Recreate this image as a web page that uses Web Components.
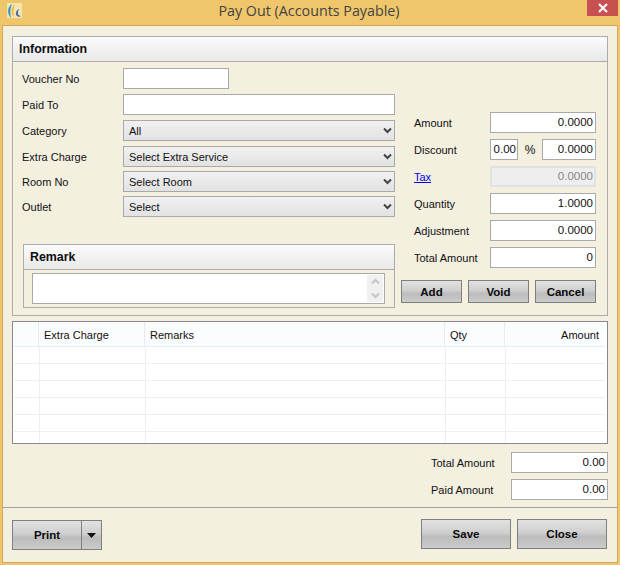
<!DOCTYPE html>
<html>
<head>
<meta charset="utf-8">
<title>Pay Out (Accounts Payable)</title>
<style>
  html, body { margin: 0; padding: 0; background: #f4f0e0; }
  body { font: 11px "Liberation Sans", sans-serif; color: #111; }
</style>
</head>
<body>
<pay-window heading="Pay Out (Accounts Payable)">
  <ui-panel heading="Information" style="height:280px">
    <div style="display:flex;gap:6px;padding:6px 12px 0 10px">
      <div style="width:372px;flex:none;--label-shift:-1px">
        <form-row label="Voucher No" width="100"><ui-box style="flex:none;width:106px"></ui-box></form-row>
        <form-row label="Paid To" width="100" style="margin-top:5px"><ui-box></ui-box></form-row>
        <form-row label="Category" width="100" style="margin-top:5px"><ui-select>All</ui-select></form-row>
        <form-row label="Extra Charge" width="100" style="margin-top:5px"><ui-select>Select Extra Service</ui-select></form-row>
        <form-row label="Room No" width="100" style="margin-top:4px"><ui-select>Select Room</ui-select></form-row>
        <form-row label="Outlet" width="100" style="margin-top:4px"><ui-select>Select</ui-select></form-row>
        <ui-panel heading="Remark" compact style="margin-top:27px;height:64px">
          <remark-box></remark-box>
        </ui-panel>
      </div>
      <div style="width:195px;flex:none;padding-top:44px">
        <div style="padding-left:13px">
          <form-row label="Amount" width="76"><ui-box align="right">0.0000</ui-box></form-row>
          <form-row label="Discount" width="76" style="margin-top:6px">
            <ui-box align="right" tight style="width:28px;flex:none">0.00</ui-box>
            <span style="width:24px;text-align:center;flex:none;font-size:12px">%</span>
            <ui-box align="right">0.0000</ui-box>
          </form-row>
          <form-row label="Tax" link width="76" style="margin-top:6px"><ui-box align="right" disabled>0.0000</ui-box></form-row>
          <form-row label="Quantity" width="76" style="margin-top:6px"><ui-box align="right">1.0000</ui-box></form-row>
          <form-row label="Adjustment" width="76" style="margin-top:6px"><ui-box align="right">0.0000</ui-box></form-row>
          <form-row label="Total Amount" width="76" style="margin-top:6px"><ui-box align="right">0</ui-box></form-row>
        </div>
        <div style="display:flex;gap:6px;margin-top:12px">
          <ui-button style="width:61px;height:23px">Add</ui-button>
          <ui-button style="width:61px;height:23px">Void</ui-button>
          <ui-button style="width:61px;height:23px">Cancel</ui-button>
        </div>
      </div>
    </div>
  </ui-panel>

  <charge-grid style="margin-top:5px"></charge-grid>

  <div style="width:177px;margin:8px 0 0 auto">
    <form-row label="Total Amount" width="80"><ui-box align="right">0.00</ui-box></form-row>
    <form-row label="Paid Amount" width="80" style="margin-top:6px"><ui-box align="right">0.00</ui-box></form-row>
  </div>

  <ui-button slot="footer-left" split style="width:90px;height:30px;margin-top:1px">Print</ui-button>
  <ui-button slot="footer-right" style="width:90px;height:30px">Save</ui-button>
  <ui-button slot="footer-right" style="width:90px;height:30px">Close</ui-button>
</pay-window>

<script>
class PayWindow extends HTMLElement {
  constructor() {
    super();
    const shadowRoot = this.attachShadow({ mode: 'open' });
    shadowRoot.innerHTML = `<style>
        :host { display: flex; flex-direction: column; width: 620px; height: 565px; background: #efc66b; box-sizing: border-box; padding: 0 2px 2px 2px; overflow: hidden; }
        .title { height: 25px; flex: none; display: flex; align-items: center; justify-content: center; position: relative; font: 14.3px "Open Sans", sans-serif; color: #444; padding: 0 2px 4px 0; box-sizing: border-box; }
        .logo { position: absolute; left: 3px; top: 2px; }
        .close { position: absolute; right: 0; top: 0; width: 31px; height: 16px; background: #c75050; display: flex; align-items: center; justify-content: center; }
        .body { flex: 1; display: flex; flex-direction: column; background: #f4f0e0; border: 1px solid #d3a85a; min-height: 0; }
        .main { flex: 1; padding: 10px 9px 0 9px; }
        .footer { height: 55px; flex: none; box-sizing: border-box; border-top: 1px solid #a0a0a0; padding: 11px 10px 0 9px; display: flex; justify-content: space-between; align-items: flex-start; }
        .right { display: flex; gap: 6px; }
        </style>
        <div class="title">
          <svg class="logo" width="18" height="18" viewBox="0 0 18 18">
            <rect x="2" y="1" width="15" height="15" fill="#f4e4ad"/>
            <path d="M7 2C2 5 2 12 6 16C5 11 5 7 7 2Z" fill="#3a93c6"/>
            <path d="M10 2C6 5 6 12 9 15C8 11 8 7 10 2Z" fill="#e6b42e"/>
            <path d="M14 7C11 8 10 12 12 14C13 15 15 15 16 14C13 14 12 11 14 7Z" fill="#4468b0"/>
          </svg>
          <span id="heading"></span>
          <div class="close"><svg width="10" height="10" viewBox="0 0 10 10"><path d="M1 1L9 9M9 1L1 9" stroke="#fff" stroke-width="2"/></svg></div>
        </div>
        <div class="body">
          <div class="main"><slot></slot></div>
          <div class="footer">
            <slot name="footer-left"></slot>
            <div class="right"><slot name="footer-right"></slot></div>
          </div>
        </div>`;
    shadowRoot.querySelector('#heading').textContent = this.getAttribute('heading');
  }
}
customElements.define('pay-window', PayWindow);

class UiPanel extends HTMLElement {
  constructor() {
    super();
    const shadowRoot = this.attachShadow({ mode: 'open' });
    shadowRoot.innerHTML = `<style>
        :host { display: block; box-sizing: border-box; border: 1px solid #ababab; }
        .head { height: 25px; box-sizing: border-box; border-bottom: 1px solid #ababab; background: linear-gradient(#fbfbfb, #e8e8e8); padding-left: 6px; display: flex; align-items: center; font-weight: 700; font-size: 12.4px; color: #0d0d0d; }
        </style>
        <div class="head"></div>
        <slot></slot>`;
    shadowRoot.querySelector('.head').textContent = this.getAttribute('heading');
  }
}
customElements.define('ui-panel', UiPanel);

class FormRow extends HTMLElement {
  constructor() {
    super();
    const shadowRoot = this.attachShadow({ mode: 'open' });
    const width = this.getAttribute('width');
    shadowRoot.innerHTML = `<style>
        :host { display: flex; align-items: center; height: 21px; }
        .label { flex: none; width: ${width}px; position: relative; left: var(--label-shift, 0); color: #111; white-space: nowrap; }
        .link { color: #0000ee; text-decoration: underline; }
        ::slotted(ui-box), ::slotted(ui-select) { flex: 1; }
        </style>
        <span class="label"></span><slot></slot>`;
    const label = shadowRoot.querySelector('.label');
    label.textContent = this.getAttribute('label');
    if (this.hasAttribute('link')) label.classList.add('link');
  }
}
customElements.define('form-row', FormRow);

class UiBox extends HTMLElement {
  constructor() {
    super();
    const shadowRoot = this.attachShadow({ mode: 'open' });
    shadowRoot.innerHTML = `<style>
        :host { display: flex; align-items: center; box-sizing: border-box; height: 21px; border: 1px solid #a9a9a9; background: #fff; padding: 0 2px 1px 2px; font-size: 11.5px; color: #111; white-space: nowrap; overflow: hidden; }
        :host([align="right"]) { justify-content: flex-end; }
        :host([tight]) { padding: 0 1px 1px 1px; }
        :host([disabled]) { background: #eee; border: 2px solid #e2e2e0; color: #888; padding-right: 1px; }
        </style><slot></slot>`;
  }
}
customElements.define('ui-box', UiBox);

class UiSelect extends HTMLElement {
  constructor() {
    super();
    const shadowRoot = this.attachShadow({ mode: 'open' });
    shadowRoot.innerHTML = `<style>
        :host { display: flex; align-items: center; justify-content: space-between; box-sizing: border-box; height: 21px; border: 1px solid #a9a9a9; background: linear-gradient(#f1f1f1, #e2e2e2); padding: 0 2px 0 5px; color: #111; }
        svg { flex: none; }
        </style>
        <slot></slot>
        <svg width="9" height="7" viewBox="0 0 9 7"><path d="M1 1.5L4.5 5L8 1.5" fill="none" stroke="#444" stroke-width="2"/></svg>`;
  }
}
customElements.define('ui-select', UiSelect);

class UiButton extends HTMLElement {
  constructor() {
    super();
    const shadowRoot = this.attachShadow({ mode: 'open' });
    const split = this.hasAttribute('split');
    shadowRoot.innerHTML = `<style>
        :host { display: flex; box-sizing: border-box; border: 1px solid #7f7f7f; background: linear-gradient(#e2e2e2, #cfcfcf 45%, #bcbcbc 60%, #cbcbcb); font-weight: 700; font-size: 11.5px; color: #0a0a0a; }
        .text { flex: 1; display: flex; align-items: center; justify-content: center; }
        .drop { flex: none; width: 19px; border-left: 1px solid #7f7f7f; display: flex; align-items: center; justify-content: center; }
        </style>
        <div class="text"><slot></slot></div>
        ${split ? '<div class="drop"><svg width="9" height="5" viewBox="0 0 9 5"><path d="M0 0H9L4.5 5Z" fill="#111"/></svg></div>' : ''}`;
  }
}
customElements.define('ui-button', UiButton);

class RemarkBox extends HTMLElement {
  constructor() {
    super();
    const shadowRoot = this.attachShadow({ mode: 'open' });
    shadowRoot.innerHTML = `<style>
        :host { display: block; box-sizing: border-box; height: 31px; margin: 3px 9px 0 8px; border: 1px solid #a9a9a9; background: #fff; position: relative; }
        .bar { position: absolute; right: 1px; top: 1px; bottom: 1px; width: 16px; background: #f0f0f0; display: flex; flex-direction: column; align-items: center; justify-content: space-around; }
        </style>
        <div class="bar">
          <svg width="9" height="7" viewBox="0 0 9 7"><path d="M1 5.5L4.5 2L8 5.5" fill="none" stroke="#c4c4c4" stroke-width="2"/></svg>
          <svg width="9" height="7" viewBox="0 0 9 7"><path d="M1 1.5L4.5 5L8 1.5" fill="none" stroke="#c4c4c4" stroke-width="2"/></svg>
        </div>`;
  }
}
customElements.define('remark-box', RemarkBox);

class ChargeGrid extends HTMLElement {
  constructor() {
    super();
    const shadowRoot = this.attachShadow({ mode: 'open' });
    const cols = '26px 106px 300px 60px 1fr';
    const emptyRow = '<div class="row">' + '<i></i>'.repeat(5) + '</div>';
    shadowRoot.innerHTML = `<style>
        :host { display: block; box-sizing: border-box; height: 123px; border: 1px solid #888; background: #fff; overflow: hidden; }
        .head, .row { display: grid; grid-template-columns: ${cols}; }
        .head { height: 25px; box-sizing: border-box; background: #fbfcfe; border-bottom: 1px solid #e4ecfa; margin-right: 2px; color: #111; }
        .head span { display: flex; align-items: center; padding: 1px 5px 0; border-right: 1px solid #e4ecfa; white-space: nowrap; }
        .head span:last-child { justify-content: flex-end; border-right: 0; padding-right: 6px; }
        .row { height: 17px; box-sizing: border-box; border-bottom: 1px solid #eee; margin-left: 1px; margin-right: 2px; }
        .row i { border-right: 1px solid #eee; }
        .row i:last-child { border-right: 0; }
        </style>
        <div class="head"><span></span><span>Extra Charge</span><span>Remarks</span><span>Qty</span><span>Amount</span></div>
        ${emptyRow.repeat(6)}`;
  }
}
customElements.define('charge-grid', ChargeGrid);
</script>
</body>
</html>
